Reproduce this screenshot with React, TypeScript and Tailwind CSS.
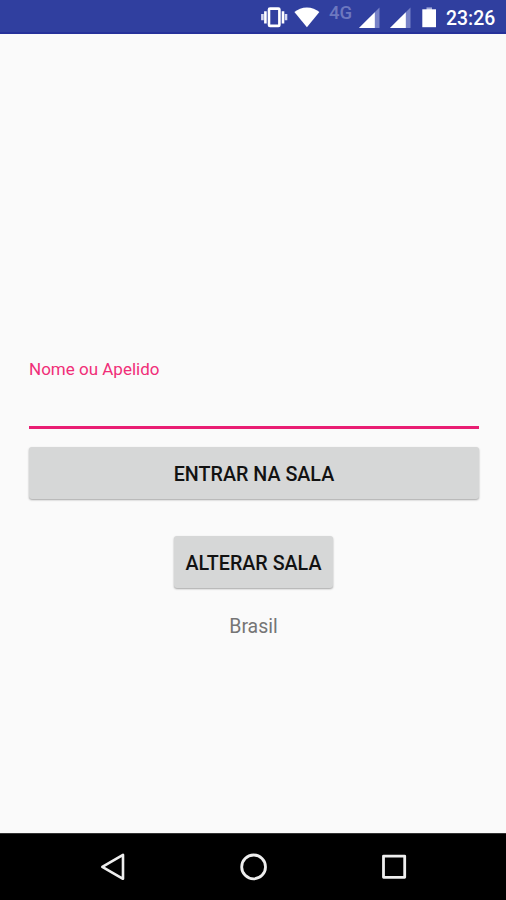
import React from "react";

function VibrateIcon() {
  return (
    <svg width="28" height="34" viewBox="0 0 28 34" className="block shrink-0">
      <rect x="9" y="8.6" width="10.4" height="17.3" rx="1" fill="none" stroke="#fff" strokeWidth="2.6" />
      <path d="M5.4 11.2V23.6M23 11.2V23.6" stroke="#fff" strokeWidth="2.6" />
      <path d="M2.4 14V20.3M26 14V20.3" stroke="#d5d8f0" strokeWidth="2.6" />
    </svg>
  );
}

function WifiIcon() {
  return (
    <svg width="26" height="34" viewBox="0 0 26 34" className="ml-[6px] block shrink-0">
      <path d="M.4 12C3.8 9.2 8.1 7.4 12.9 7.4S22 9.2 25.4 12L12.9 27.3Z" fill="#fff" />
    </svg>
  );
}

function SignalIcon({ className }: { className: string }) {
  return (
    <svg width="22" height="34" viewBox="0 0 22 34" className={className}>
      <path d="M20.5 7.5V28H0Z" fill="#7782c7" />
      <path d="M15.8 12.2V28H0Z" fill="#fff" />
    </svg>
  );
}

function BatteryIcon() {
  return (
    <svg width="16" height="34" viewBox="0 0 16 34" className="ml-[9px] block shrink-0">
      <path d="M5.5 7.4H11V10H5.5Z" fill="#a5acda" />
      <path d="M1.3 9.3H15V27.2H1.3Z" fill="#fff" />
    </svg>
  );
}

function StatusBar() {
  return (
    <header className="flex h-[34px] shrink-0 items-start border-b-2 border-[#26319a] bg-[#303f9f] pl-[260px]">
      <VibrateIcon />
      <WifiIcon />
      <span className="ml-[9px] w-[29px] pt-[3px] text-[18.5px] font-medium leading-5 text-[#6d78bf]">4G</span>
      <SignalIcon className="ml-px block shrink-0" />
      <SignalIcon className="ml-[9px] block shrink-0" />
      <BatteryIcon />
      <span className="ml-[9px] pt-[9px] text-[19.4px] font-medium leading-5 text-white">23:26</span>
    </header>
  );
}

function NavigationBar() {
  return (
    <nav className="flex h-[67px] shrink-0 items-center justify-center gap-[112px] border-t border-[#333] bg-black pl-[2px]">
      <svg width="28" height="28" viewBox="0 0 28 28" fill="none" stroke="#eee" strokeWidth="2.6" strokeLinejoin="round">
        <path d="M23 1.8V25.8L2.3 13.8Z" />
      </svg>
      <svg width="28" height="28" viewBox="0 0 28 28" fill="none" stroke="#eee" strokeWidth="2.8">
        <circle cx="13.6" cy="13.9" r="11.9" />
      </svg>
      <svg width="28" height="28" viewBox="0 0 28 28" fill="none" stroke="#eee" strokeWidth="2.8" strokeLinejoin="round">
        <rect x="3.5" y="3.1" width="21.2" height="21.2" />
      </svg>
    </nav>
  );
}

export default function App() {
  return (
    <div className="flex h-[900px] w-[506px] flex-col overflow-hidden bg-[#fafafa] font-[Roboto,sans-serif]">
      <StatusBar />
      <main className="flex grow flex-col px-[28px] pt-[325px]">
        <label htmlFor="nickname" className="h-[20px] pl-px text-[17px] leading-5 text-[#f02e78]">
          Nome ou Apelido
        </label>
        <input
          id="nickname"
          className="ml-px h-[50px] w-[450px] border-b-[3px] border-[#e91e73] bg-transparent text-xl outline-none"
        />
        <button className="ml-px mt-[18px] h-[52px] w-[450px] rounded-[3px] bg-[#d6d7d7] pt-[3px] text-[19.7px] font-medium text-[#121212] shadow-[0_1px_2px_rgba(0,0,0,0.35)]">
          ENTRAR NA SALA
        </button>
        <button className="mt-[37px] h-[52px] w-[159px] self-center rounded-[3px] bg-[#d6d7d7] pl-px pt-[3px] text-[19.7px] font-medium text-[#121212] shadow-[0_1px_2px_rgba(0,0,0,0.35)]">
          ALTERAR SALA
        </button>
        <p className="mt-[27px] pl-px text-center text-[19.5px] leading-6 text-[#757575]">Brasil</p>
      </main>
      <NavigationBar />
    </div>
  );
}
